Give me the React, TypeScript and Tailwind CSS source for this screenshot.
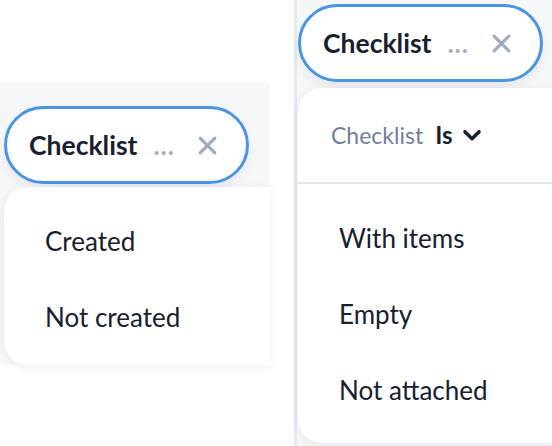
import React from "react";

const ink = "text-[#18202f]";

function CloseIcon() {
  return (
    <svg width="21" height="21" viewBox="0 0 20 20" fill="none" aria-hidden="true">
      <path d="M3 3L17 17M17 3L3 17" stroke="#a0abbb" strokeWidth="3" strokeLinecap="round" />
    </svg>
  );
}

function Chevron() {
  return (
    <svg width="20" height="13" viewBox="0 0 18 12" fill="none" aria-hidden="true">
      <path d="M2.5 2.5L9 9L15.5 2.5" stroke="#18202f" strokeWidth="3.2" strokeLinecap="round" strokeLinejoin="round" />
    </svg>
  );
}

function Chip() {
  return (
    <div className="flex h-[78px] w-[245px] shrink-0 items-center rounded-full border-[3px] border-[#4a94e4] bg-white pl-[22px] shadow-[0_6px_10px_rgba(30,40,60,0.06)]">
      <span className={`text-[26.5px] font-bold leading-none ${ink}`}>Checklist</span>
      <span className="ml-[16px] text-[26px] font-bold leading-none tracking-[1px] text-[#a3aebe]">...</span>
      <span className="ml-[22px] flex items-center">
        <CloseIcon />
      </span>
    </div>
  );
}

function Option({ label }: { label: string }) {
  return <div className={`flex h-[76px] items-center text-[26px] ${ink}`}>{label}</div>;
}

export default function App() {
  return (
    <div className="flex h-[446px] w-[552px] overflow-hidden bg-white font-['Lato',sans-serif]">
      <div className="flex w-[270px] shrink-0 flex-col">
        <div className="h-[82px] shrink-0" />
        <div className="flex h-[283px] flex-col bg-[#f6f7f9] pl-[4px] pt-[24px]">
          <Chip />
          <div className="mt-[3px] flex-1 rounded-l-[24px] bg-white pl-[41px] pt-[16px] shadow-[0_2px_10px_rgba(30,40,60,0.08)]">
            <Option label="Created" />
            <Option label="Not created" />
          </div>
        </div>
      </div>

      <div className="ml-[24px] flex flex-1 flex-col border-l-[3px] border-[#e6eaef] bg-[#f6f7f9] pl-[1px] pt-[4px]">
        <Chip />
        <div className="mt-[6px] h-[355px] rounded-l-[24px] bg-white shadow-[0_2px_10px_rgba(30,40,60,0.08)]">
          <div className="flex h-[96px] items-center border-b-2 border-[#e3e8ee] pl-[33px]">
            <span className="text-[23px] text-[#718099]">Checklist</span>
            <span className={`ml-[12px] text-[24px] font-bold ${ink}`}>Is</span>
            <span className="ml-[9px] flex items-center">
              <Chevron />
            </span>
          </div>
          <div className="pl-[41px] pt-[16px]">
            <Option label="With items" />
            <Option label="Empty" />
            <Option label="Not attached" />
          </div>
        </div>
      </div>
    </div>
  );
}
